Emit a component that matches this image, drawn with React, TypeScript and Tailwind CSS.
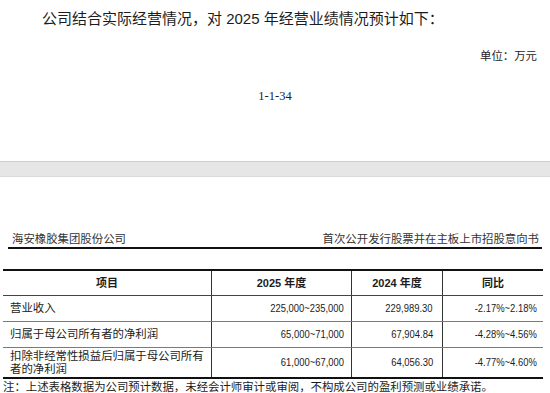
import React from "react";

const cjk = "font-['Liberation_Sans','Noto_Sans_CJK_SC',sans-serif]";

const rows = [
  { label: "营业收入", cur: "225,000~235,000", prev: "229,989.30", yoy: "-2.17%~2.18%", h: "h-[26px]" },
  { label: "归属于母公司所有者的净利润", cur: "65,000~71,000", prev: "67,904.84", yoy: "-4.28%~4.56%", h: "h-[26px]" },
  {
    label: "扣除非经常性损益后归属于母公司所有者的净利润",
    cur: "61,000~67,000",
    prev: "64,056.30",
    yoy: "-4.77%~4.60%",
    h: "h-[29px]",
  },
];

const grid = "grid grid-cols-[209px_140px_91px_100px]";

// narrow digits like the PDF's Arial Narrow
const Num = ({ children }: { children: React.ReactNode }) => (
  <span className="inline-block whitespace-nowrap origin-right scale-x-[0.82] text-[11.5px]">{children}</span>
);

export default function App() {
  return (
    <div className={`w-[550px] h-[393px] overflow-hidden bg-white text-[#1c1c1c] ${cjk}`}>
      {/* page 1 tail */}
      <div className="h-[161px] flex flex-col">
        <p className="pt-[9px] pl-[42px] text-[15px] leading-[20px]">
          公司结合实际经营情况，对 2025 年经营业绩情况预计如下：
        </p>
        <div className="mt-[20px] pr-[13px] text-right text-[11.4px] leading-[14px]">单位：万元</div>
        <div className="mt-[26px] text-center text-[12.5px] leading-[14px] font-['Liberation_Serif',serif]">1-1-34</div>
      </div>

      {/* page gap */}
      <div className="h-[16px] bg-[#e6e6e6] border-t border-t-[#cdcdcd] border-b border-b-[#dadada]" />

      {/* page 2 */}
      <div className="mx-[8px] pt-[55px] pb-[1px] flex justify-between border-b-2 border-[#111] text-[11.4px] leading-[14px] text-[#333]">
        <span className="pl-[4px]">海安橡胶集团股份公司</span>
        <span className="pr-[3px]">首次公开发行股票并在主板上市招股意向书</span>
      </div>

      <div className="mt-[20px] ml-[3px] w-[540px] border-t-2 border-b-2 border-[#111]">
        <div className={`${grid} h-[25px] border-b border-[#444] font-bold text-[11px]`}>
          <div className="flex items-center justify-center border-r border-[#333]">项目</div>
          <div className="flex items-center justify-center border-r border-[#333]">2025 年度</div>
          <div className="flex items-center justify-center border-r border-[#333]">2024 年度</div>
          <div className="flex items-center justify-center">同比</div>
        </div>
        {rows.map((r, i) => (
          <div
            key={r.label}
            className={`${grid} ${r.h} ${i < rows.length - 1 ? "border-b border-[#7a7a7a]" : ""}`}
          >
            <div className="flex items-center pl-[7px] pr-[4px] border-r border-[#333] text-[11.4px] leading-[13px]">
              {r.label}
            </div>
            <div className="flex items-center justify-end pr-[7px] border-r border-[#333]">
              <Num>{r.cur}</Num>
            </div>
            <div className="flex items-center justify-end pr-[9px] border-r border-[#333]">
              <Num>{r.prev}</Num>
            </div>
            <div className="flex items-center justify-end pr-[6px]">
              <Num>{r.yoy}</Num>
            </div>
          </div>
        ))}
      </div>

      <p className="pl-[3px] text-[11.4px] leading-[16px]">
        注：上述表格数据为公司预计数据，未经会计师审计或审阅，不构成公司的盈利预测或业绩承诺。
      </p>
    </div>
  );
}
